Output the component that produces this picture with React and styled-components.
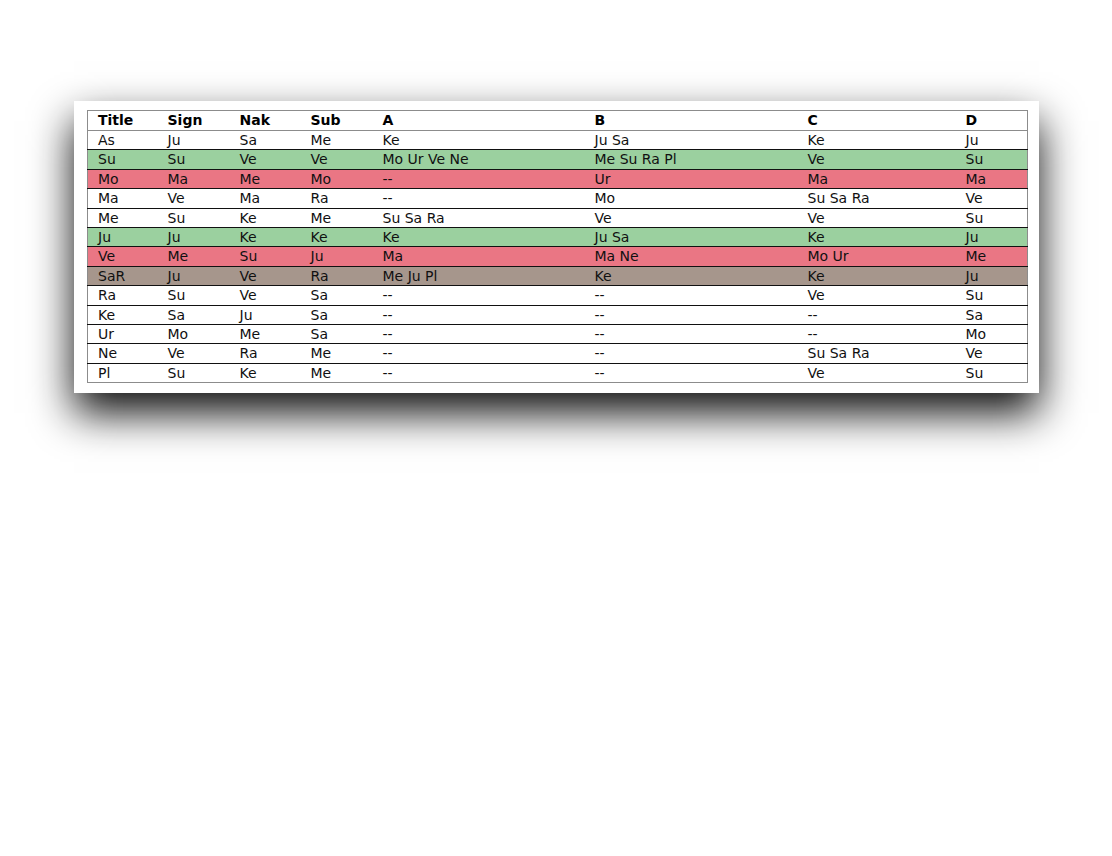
import React from "react";
import styled, { createGlobalStyle } from "styled-components";

const Global = createGlobalStyle`
  html, body { margin: 0; padding: 0; background: #fff; }
  body { font-family: "DejaVu Sans", Verdana, sans-serif; }
`;

const Page = styled.div`
  padding: 101px 0 0 74px;
  min-height: 856px;
  box-sizing: border-box;
`;

const Panel = styled.div`
  width: 965px;
  box-sizing: border-box;
  background: #fff;
  padding: 9px 12px 10px 13px;
  box-shadow: 0 20px 40px rgba(0, 0, 0, 0.95);
`;

const Table = styled.table`
  width: 940px;
  border-collapse: collapse;
  table-layout: fixed;
  border: 1px solid #8c8c8c;
  font-size: 14px;
  color: #111;
`;

const bg = {
  white: "#ffffff",
  green: "#9bd09f",
  red: "#ea7684",
  brown: "#a6968c",
};

const Row = styled.tr`
  background: ${(p) => bg[p.$tone || "white"]};
  border-bottom: 1px solid #111;
  &:last-child { border-bottom: 1px solid #8c8c8c; }
`;

const Th = styled.th`
  text-align: left;
  font-weight: bold;
  padding: 0 0 0 10px;
  height: 19px;
  line-height: 19px;
  color: #000;
  white-space: nowrap;
`;

const Td = styled.td`
  padding: 0 0 0 10px;
  height: 18.4px;
  line-height: 18.4px;
  white-space: nowrap;
  overflow: hidden;
`;

const widths = [70, 72, 71, 72, 212, 213, 158, 72];
const headers = ["Title", "Sign", "Nak", "Sub", "A", "B", "C", "D"];

const rows = [
  { tone: "white", cells: ["As", "Ju", "Sa", "Me", "Ke", "Ju Sa", "Ke", "Ju"] },
  { tone: "green", cells: ["Su", "Su", "Ve", "Ve", "Mo Ur Ve Ne", "Me Su Ra Pl", "Ve", "Su"] },
  { tone: "red", cells: ["Mo", "Ma", "Me", "Mo", "--", "Ur", "Ma", "Ma"] },
  { tone: "white", cells: ["Ma", "Ve", "Ma", "Ra", "--", "Mo", "Su Sa Ra", "Ve"] },
  { tone: "white", cells: ["Me", "Su", "Ke", "Me", "Su Sa Ra", "Ve", "Ve", "Su"] },
  { tone: "green", cells: ["Ju", "Ju", "Ke", "Ke", "Ke", "Ju Sa", "Ke", "Ju"] },
  { tone: "red", cells: ["Ve", "Me", "Su", "Ju", "Ma", "Ma Ne", "Mo Ur", "Me"] },
  { tone: "brown", cells: ["SaR", "Ju", "Ve", "Ra", "Me Ju Pl", "Ke", "Ke", "Ju"] },
  { tone: "white", cells: ["Ra", "Su", "Ve", "Sa", "--", "--", "Ve", "Su"] },
  { tone: "white", cells: ["Ke", "Sa", "Ju", "Sa", "--", "--", "--", "Sa"] },
  { tone: "white", cells: ["Ur", "Mo", "Me", "Sa", "--", "--", "--", "Mo"] },
  { tone: "white", cells: ["Ne", "Ve", "Ra", "Me", "--", "--", "Su Sa Ra", "Ve"] },
  { tone: "white", cells: ["Pl", "Su", "Ke", "Me", "--", "--", "Ve", "Su"] },
];

export default function App() {
  return (
    <>
      <Global />
      <Page>
        <Panel>
          <Table>
            <colgroup>
              {widths.map((w, i) => (
                <col key={i} style={{ width: w }} />
              ))}
            </colgroup>
            <thead>
              <Row $tone="white">
                {headers.map((h) => (
                  <Th key={h}>{h}</Th>
                ))}
              </Row>
            </thead>
            <tbody>
              {rows.map((r, i) => (
                <Row key={i} $tone={r.tone}>
                  {r.cells.map((c, j) => (
                    <Td key={j}>{c}</Td>
                  ))}
                </Row>
              ))}
            </tbody>
          </Table>
        </Panel>
      </Page>
    </>
  );
}
